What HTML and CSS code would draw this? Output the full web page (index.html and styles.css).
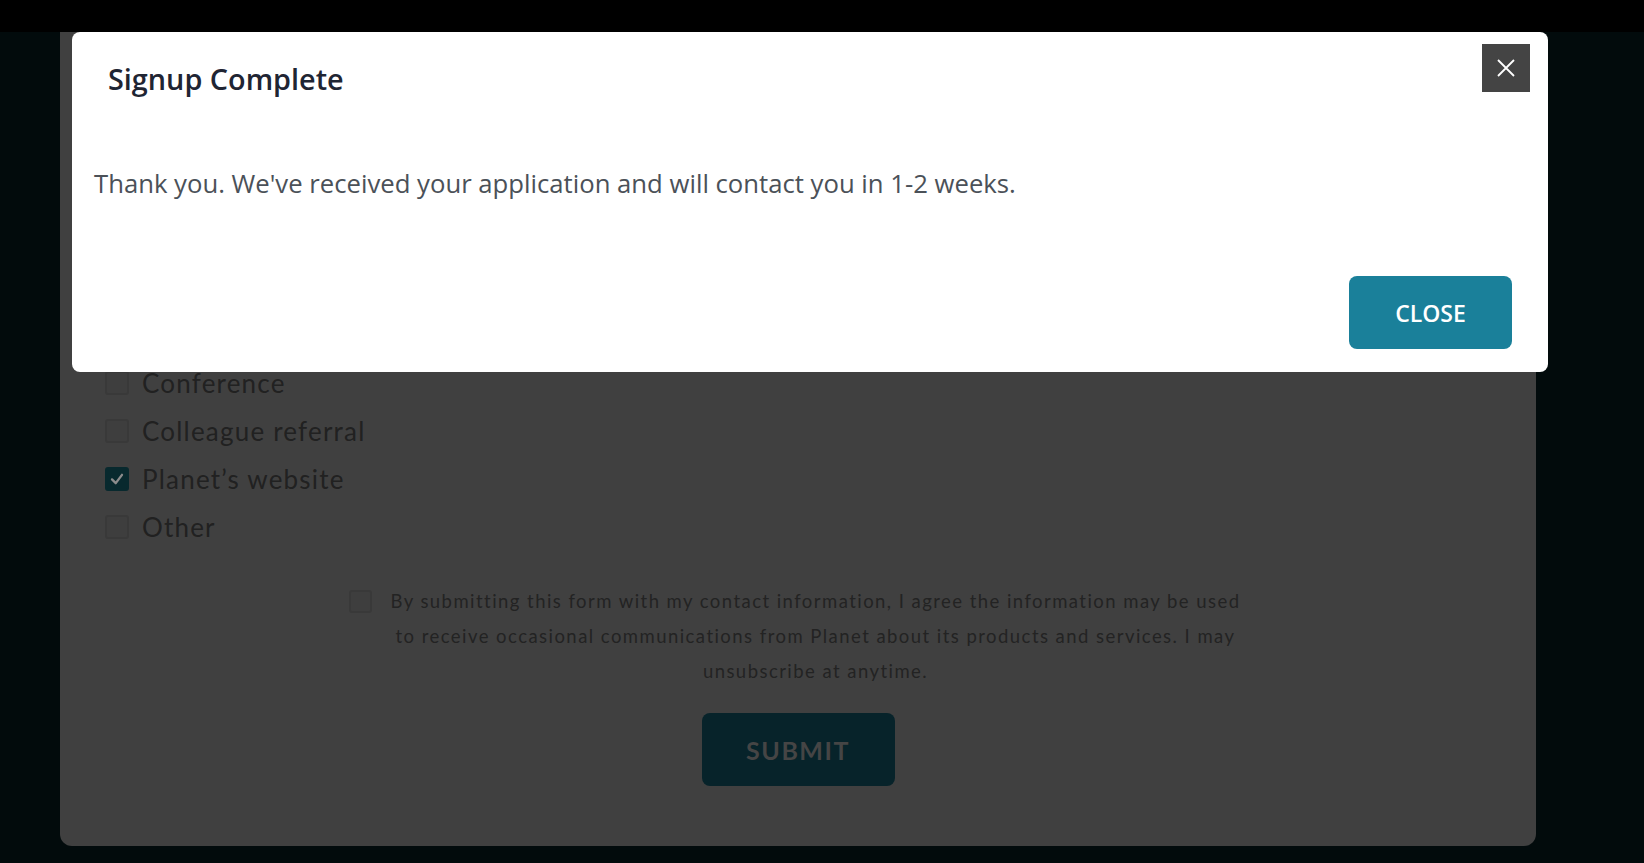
FILE: index.html
```html
<!DOCTYPE html>
<html lang="en">
<head>
<meta charset="utf-8">
<title>Signup Complete</title>
<link rel="stylesheet" href="styles.css">
</head>
<body>
<header class="topbar"></header>
<main class="page">
  <section class="card">
    <div class="options">
      <label class="option"><span class="box"></span><span class="opt-text">Conference</span></label>
      <label class="option"><span class="box"></span><span class="opt-text">Colleague referral</span></label>
      <label class="option"><span class="box checked"><svg viewBox="0 0 24 24" width="24" height="24"><polyline points="6,12.5 10.5,17 18,7" fill="none" stroke="#8c8c8c" stroke-width="2.8" stroke-linecap="round" stroke-linejoin="round"/></svg></span><span class="opt-text">Planet’s website</span></label>
      <label class="option"><span class="box"></span><span class="opt-text">Other</span></label>
    </div>
    <div class="consent">
      <span class="box small"></span>
      <p class="consent-text">By submitting this form with my contact information, I agree the information may be used<br>to receive occasional communications from Planet about its products and services. I may<br>unsubscribe at anytime.</p>
    </div>
    <button class="submit" type="button">SUBMIT</button>
  </section>
</main>
<div class="modal" role="dialog" aria-labelledby="modal-title">
  <button class="modal-x" type="button" aria-label="Close">
    <svg viewBox="0 0 18 18" width="18" height="18"><path d="M1 1 L17 17 M17 1 L1 17" stroke="#ffffff" stroke-width="1.8" fill="none"/></svg>
  </button>
  <div class="modal-header">
    <h2 class="modal-title" id="modal-title">Signup Complete</h2>
  </div>
  <p class="modal-body">Thank you. We've received your application and will contact you in 1-2 weeks.</p>
  <div class="modal-footer">
    <button class="btn-close" type="button">CLOSE</button>
  </div>
</div>
</body>
</html>
```
FILE: styles.css
```css
* { box-sizing: border-box; }

html, body {
  margin: 0;
  padding: 0;
}

body {
  background: #020b0c;
  width: 1644px;
  height: 863px;
  overflow: hidden;
  position: relative;
  font-family: "Open Sans", "Noto Sans", sans-serif;
}

.topbar {
  height: 32px;
  background: #000000;
}

.page {
  padding-left: 60px;
}

.card {
  width: 1476px;
  background: #404040;
  border-radius: 0 0 12px 12px;
  padding: 327px 0 60px 0;
  font-family: "Lato", "Open Sans", sans-serif;
  color: #222222;
}

.options {
  display: flex;
  flex-direction: column;
  padding-left: 45px;
}

.option {
  display: flex;
  align-items: center;
  gap: 13px;
  height: 48px;
  font-size: 26px;
  letter-spacing: 1.2px;
  color: #212121;
}

.box {
  flex: none;
  width: 24px;
  height: 24px;
  border: 2px solid #393939;
  border-radius: 3px;
  background: #3e3e3e;
  display: flex;
  align-items: center;
  justify-content: center;
}

.box.checked {
  background: #08292e;
  border-color: #08292e;
}

.box.checked svg {
  display: block;
}

.box.small {
  width: 23px;
  height: 23px;
  margin-top: 6px;
}

.consent {
  display: flex;
  justify-content: center;
  gap: 18px;
  margin-top: 33px;
  margin-left: -6px;
}

.consent-text {
  margin: 0;
  font-size: 18.5px;
  line-height: 35px;
  letter-spacing: 1.45px;
  text-align: center;
  color: #232323;
}

.submit {
  display: block;
  margin: 24px auto 0;
  width: 193px;
  height: 73px;
  border: none;
  border-radius: 8px;
  background: #07232a;
  color: #454545;
  font-family: "Lato", "Open Sans", sans-serif;
  font-weight: 700;
  font-size: 25px;
  letter-spacing: 1.5px;
}

.modal {
  position: absolute;
  left: 72px;
  top: 32px;
  width: 1476px;
  height: 340px;
  background: #ffffff;
  border-radius: 8px;
  display: flex;
  flex-direction: column;
}

.modal-x {
  position: absolute;
  top: 12px;
  right: 18px;
  width: 48px;
  height: 48px;
  border: none;
  padding: 0;
  background: #444444;
  display: flex;
  align-items: center;
  justify-content: center;
}

.modal-header {
  padding: 30px 36px 0;
}

.modal-title {
  margin: 0;
  font-size: 28.8px;
  line-height: 34px;
  font-weight: 600;
  color: #1f2533;
}

.modal-body {
  margin: 70px 0 0;
  padding: 0 22px;
  font-size: 25.7px;
  line-height: 36px;
  color: #4b5158;
}

.modal-footer {
  margin-top: auto;
  display: flex;
  justify-content: flex-end;
  padding: 0 36px 23px;
}

.btn-close {
  width: 163px;
  height: 73px;
  border: none;
  border-radius: 8px;
  background: #1a809a;
  color: #ffffff;
  font-family: "Open Sans", "Noto Sans", sans-serif;
  font-weight: 600;
  font-size: 23px;
}
```
